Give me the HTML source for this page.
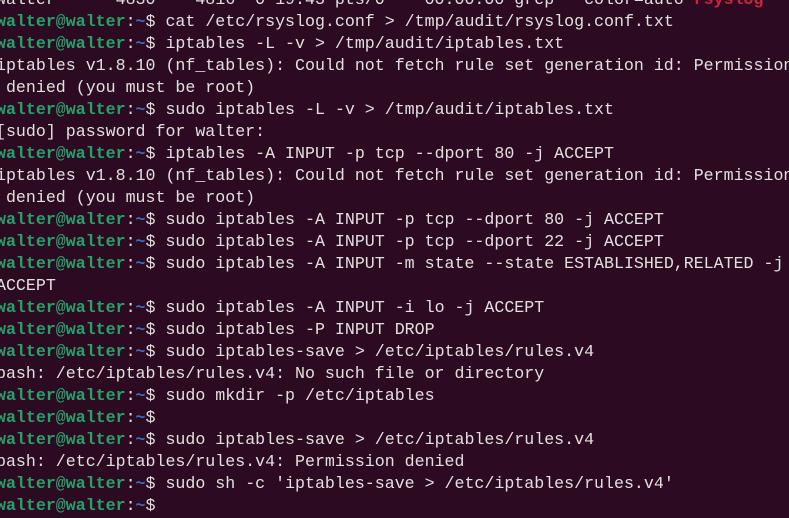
<!DOCTYPE html>
<html><head><meta charset="utf-8"><style>
html,body{margin:0;padding:0;width:789px;height:518px;overflow:hidden;background:#2c0b22;}
pre{position:absolute;left:-4px;top:-11px;margin:0;font-family:"Liberation Mono","DejaVu Sans Mono",monospace;font-size:16.63px;line-height:22px;color:#e2e0dc;white-space:pre;}
.g{color:#26a269;font-weight:bold}
.b{color:#3a6fc4;font-weight:bold}
.r{color:#d0243a;font-weight:bold}
</style></head><body><pre>walter      4830    4816  0 19:43 pts/0    00:00:00 grep --color=auto <span class="r">rsyslog</span>
<span class="g">walter@walter</span>:<span class="b">~</span>$ cat /etc/rsyslog.conf &gt; /tmp/audit/rsyslog.conf.txt
<span class="g">walter@walter</span>:<span class="b">~</span>$ iptables -L -v &gt; /tmp/audit/iptables.txt
iptables v1.8.10 (nf_tables): Could not fetch rule set generation id: Permission
 denied (you must be root)
<span class="g">walter@walter</span>:<span class="b">~</span>$ sudo iptables -L -v &gt; /tmp/audit/iptables.txt
[sudo] password for walter:
<span class="g">walter@walter</span>:<span class="b">~</span>$ iptables -A INPUT -p tcp --dport 80 -j ACCEPT
iptables v1.8.10 (nf_tables): Could not fetch rule set generation id: Permission
 denied (you must be root)
<span class="g">walter@walter</span>:<span class="b">~</span>$ sudo iptables -A INPUT -p tcp --dport 80 -j ACCEPT
<span class="g">walter@walter</span>:<span class="b">~</span>$ sudo iptables -A INPUT -p tcp --dport 22 -j ACCEPT
<span class="g">walter@walter</span>:<span class="b">~</span>$ sudo iptables -A INPUT -m state --state ESTABLISHED,RELATED -j
ACCEPT
<span class="g">walter@walter</span>:<span class="b">~</span>$ sudo iptables -A INPUT -i lo -j ACCEPT
<span class="g">walter@walter</span>:<span class="b">~</span>$ sudo iptables -P INPUT DROP
<span class="g">walter@walter</span>:<span class="b">~</span>$ sudo iptables-save &gt; /etc/iptables/rules.v4
bash: /etc/iptables/rules.v4: No such file or directory
<span class="g">walter@walter</span>:<span class="b">~</span>$ sudo mkdir -p /etc/iptables
<span class="g">walter@walter</span>:<span class="b">~</span>$
<span class="g">walter@walter</span>:<span class="b">~</span>$ sudo iptables-save &gt; /etc/iptables/rules.v4
bash: /etc/iptables/rules.v4: Permission denied
<span class="g">walter@walter</span>:<span class="b">~</span>$ sudo sh -c 'iptables-save &gt; /etc/iptables/rules.v4'
<span class="g">walter@walter</span>:<span class="b">~</span>$
</pre></body></html>
